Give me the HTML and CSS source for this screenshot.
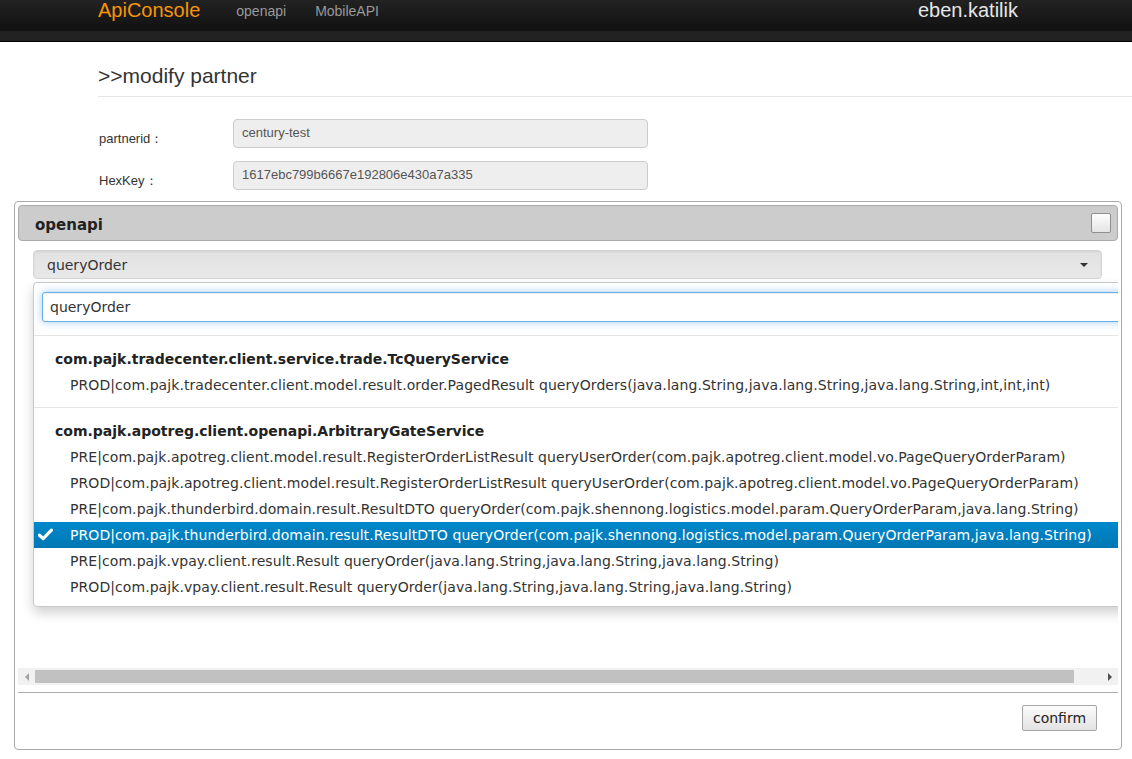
FILE: index.html
```html
<!DOCTYPE html>
<html>
<head>
<meta charset="utf-8">
<title>ApiConsole</title>
<link rel="stylesheet" href="styles.css">
</head>
<body>
<header class="navbar">
  <div class="navbar-inner">
    <a class="brand">ApiConsole</a>
    <nav class="nav">
      <a class="nav-link">openapi</a>
      <a class="nav-link">MobileAPI</a>
    </nav>
    <span class="user">eben.katilik</span>
  </div>
  <div class="navbar-band"></div>
</header>

<main class="page">
  <h2 class="page-title">&gt;&gt;modify partner</h2>
  <form class="form">
    <div class="form-row">
      <label class="form-label">partnerid：</label>
      <input class="form-input" type="text" value="century-test" readonly>
    </div>
    <div class="form-row">
      <label class="form-label">HexKey：</label>
      <input class="form-input" type="text" value="1617ebc799b6667e192806e430a7a335" readonly>
    </div>
  </form>
</main>

<section class="panel">
  <div class="panel-header">
    <span class="panel-title">openapi</span>
    <span class="panel-check"></span>
  </div>
  <div class="scroll-area">
    <div class="select">
      <span class="select-text">queryOrder</span>
      <span class="select-arrow"></span>
    </div>
    <div class="dropdown">
      <div class="search-wrap">
        <input class="search-input" type="text" value="queryOrder">
      </div>
      <ul class="group">
        <li class="group-label">com.pajk.tradecenter.client.service.trade.TcQueryService</li>
        <li class="option">PROD|com.pajk.tradecenter.client.model.result.order.PagedResult queryOrders(java.lang.String,java.lang.String,java.lang.String,int,int,int)</li>
      </ul>
      <ul class="group">
        <li class="group-label">com.pajk.apotreg.client.openapi.ArbitraryGateService</li>
        <li class="option">PRE|com.pajk.apotreg.client.model.result.RegisterOrderListResult queryUserOrder(com.pajk.apotreg.client.model.vo.PageQueryOrderParam)</li>
        <li class="option">PROD|com.pajk.apotreg.client.model.result.RegisterOrderListResult queryUserOrder(com.pajk.apotreg.client.model.vo.PageQueryOrderParam)</li>
        <li class="option">PRE|com.pajk.thunderbird.domain.result.ResultDTO queryOrder(com.pajk.shennong.logistics.model.param.QueryOrderParam,java.lang.String)</li>
        <li class="option selected"><svg class="check" width="15" height="13" viewBox="0 0 15 13"><path d="M1.5 7.2 L5.2 10.6 L13.4 2.2" fill="none" stroke="#fff" stroke-width="3.2" stroke-linecap="round" stroke-linejoin="round"/></svg>PROD|com.pajk.thunderbird.domain.result.ResultDTO queryOrder(com.pajk.shennong.logistics.model.param.QueryOrderParam,java.lang.String)</li>
        <li class="option">PRE|com.pajk.vpay.client.result.Result queryOrder(java.lang.String,java.lang.String,java.lang.String)</li>
        <li class="option">PROD|com.pajk.vpay.client.result.Result queryOrder(java.lang.String,java.lang.String,java.lang.String)</li>
      </ul>
    </div>
  </div>
  <div class="hscroll">
    <span class="hscroll-btn"><span class="tri-left"></span></span>
    <span class="hscroll-track"><span class="hscroll-thumb"></span></span>
    <span class="hscroll-btn"><span class="tri-right"></span></span>
  </div>
  <div class="panel-footer">
    <button class="btn-confirm" type="button">confirm</button>
  </div>
</section>
</body>
</html>
```

FILE: styles.css
```css
html, body {
  margin: 0;
  padding: 0;
  background: #fff;
}
body {
  font-family: "Liberation Sans", Arial, sans-serif;
  color: #333;
  width: 1132px;
  overflow: hidden;
}

/* navbar */
.navbar {
  border-bottom: 1px solid #000;
}
.navbar-inner {
  height: 31px;
  background: linear-gradient(#222222, #111111);
  display: flex;
  align-items: flex-start;
  padding-left: 98px;
}
.navbar-band {
  height: 10px;
  background: #222;
}
.brand {
  font-size: 20px;
  line-height: 20px;
  color: #f89406;
}
.nav {
  display: flex;
  margin-left: 36px;
  gap: 29px;
}
.nav-link {
  font-size: 14px;
  line-height: 20px;
  color: #999;
  margin-top: 1px;
}
.user {
  margin-left: auto;
  margin-right: 114px;
  font-size: 20px;
  line-height: 20px;
  color: #e6e6e6;
}

/* page */
.page {
  padding-left: 98px;
}
.page-title {
  margin: 19px 0 0 0;
  padding-bottom: 5px;
  font-size: 21px;
  line-height: 30px;
  font-weight: normal;
  color: #333;
  border-bottom: 1px solid #e5e5e5;
}
.form {
  margin-top: 22px;
  display: flex;
  flex-direction: column;
  gap: 13px;
}
.form-row {
  display: flex;
  align-items: flex-start;
  height: 29px;
}
.form-label {
  width: 135px;
  padding-left: 1px;
  box-sizing: border-box;
  font-size: 13px;
  line-height: 29px;
  padding-top: 5px;
  color: #333;
}
.form-input {
  width: 415px;
  height: 29px;
  box-sizing: border-box;
  border: 1px solid #ccc;
  border-radius: 4px;
  background: #eeeeee;
  padding: 0 8px 2px 8px;
  font-family: "Liberation Sans", Arial, sans-serif;
  font-size: 13px;
  color: #555;
  outline: none;
}

/* panel */
.panel {
  margin: 11px 10px 0 14px;
  border: 1px solid #aaa;
  border-radius: 4px;
  padding: 3px;
  font-family: "DejaVu Sans", Verdana, sans-serif;
}
.panel-header {
  height: 36px;
  box-sizing: border-box;
  border: 1px solid #aaa;
  border-radius: 4px;
  background: #cccccc;
  display: flex;
  align-items: center;
  padding: 0 6px 0 16px;
}
.panel-title {
  font-weight: bold;
  font-size: 15px;
  color: #222;
  margin-top: 4px;
}
.panel-check {
  margin-left: auto;
  width: 20px;
  height: 20px;
  box-sizing: border-box;
  border: 1px solid #8f8f8f;
  border-radius: 2px;
  background: linear-gradient(#fdfdfd, #e4e4e4);
}
.scroll-area {
  position: relative;
  height: 427px;
  overflow: hidden;
}
.select {
  margin: 9px 16px 0 15px;
  height: 29px;
  box-sizing: border-box;
  border: 1px solid #d6d6d6;
  border-radius: 4px;
  background: linear-gradient(#e2e2e2, #e8e8e8);
  box-shadow: inset 0 1px 2px rgba(0,0,0,0.08);
  display: flex;
  align-items: center;
  padding: 0 13px 0 13px;
}
.select-text {
  font-size: 14px;
  color: #333;
}
.select-arrow {
  margin-left: auto;
  width: 0;
  height: 0;
  border-left: 4px solid transparent;
  border-right: 4px solid transparent;
  border-top: 4px solid #333;
}
.dropdown {
  position: absolute;
  top: 41px;
  left: 15px;
  width: 1112px;
  background: #fff;
  border: 1px solid #c8c8c8;
  border-radius: 4px;
  box-shadow: 0 6px 12px rgba(0,0,0,0.18);
  padding-bottom: 6px;
}
.search-wrap {
  padding: 9px 0 13px 8px;
  border-bottom: 1px solid #e5e5e5;
}
.search-input {
  display: block;
  width: 100%;
  height: 30px;
  box-sizing: border-box;
  border: 1px solid #66afe9;
  border-radius: 3px;
  box-shadow: inset 0 1px 1px rgba(0,0,0,.075), 0 0 8px rgba(102,175,233,.6);
  padding: 0 7px;
  font-family: "DejaVu Sans", Verdana, sans-serif;
  font-size: 14px;
  color: #333;
  outline: none;
}
.group {
  list-style: none;
  margin: 0;
  padding: 10px 0 9px 0;
}
.group + .group {
  border-top: 1px solid #e5e5e5;
  padding-bottom: 0;
}
.group-label {
  font-weight: bold;
  font-size: 14px;
  line-height: 26px;
  color: #222;
  padding-left: 21px;
  white-space: nowrap;
}
.option {
  font-size: 14px;
  letter-spacing: 0.07px;
  line-height: 26px;
  color: #333;
  padding-left: 36px;
  white-space: nowrap;
  position: relative;
}
.option.selected {
  background: linear-gradient(#0088cc, #0077b3);
  color: #fff;
}
.check {
  position: absolute;
  left: 4px;
  top: 6px;
}

/* horizontal scrollbar */
.hscroll {
  height: 17px;
  background: #f1f1f1;
  display: flex;
  align-items: stretch;
}
.hscroll-btn {
  width: 17px;
  display: flex;
  align-items: center;
  justify-content: center;
}
.tri-left {
  width: 0; height: 0;
  border-top: 4px solid transparent;
  border-bottom: 4px solid transparent;
  border-right: 4px solid #a3a3a3;
}
.tri-right {
  width: 0; height: 0;
  border-top: 4px solid transparent;
  border-bottom: 4px solid transparent;
  border-left: 4px solid #505050;
}
.hscroll-track {
  flex: 1;
  display: flex;
  align-items: center;
}
.hscroll-thumb {
  width: 1039px;
  height: 13px;
  background: #c1c1c1;
}
.panel-footer {
  margin-top: 7px;
  border-top: 1px solid #aaa;
  padding: 12px 21px 15px 0;
  display: flex;
  justify-content: flex-end;
}
.btn-confirm {
  width: 75px;
  height: 26px;
  box-sizing: border-box;
  border: 1px solid #a6a6a6;
  border-radius: 2px;
  background: linear-gradient(#fbfbfb, #e3e3e3);
  font-family: "DejaVu Sans", Verdana, sans-serif;
  font-size: 14px;
  color: #222;
  padding: 0;
}
```
